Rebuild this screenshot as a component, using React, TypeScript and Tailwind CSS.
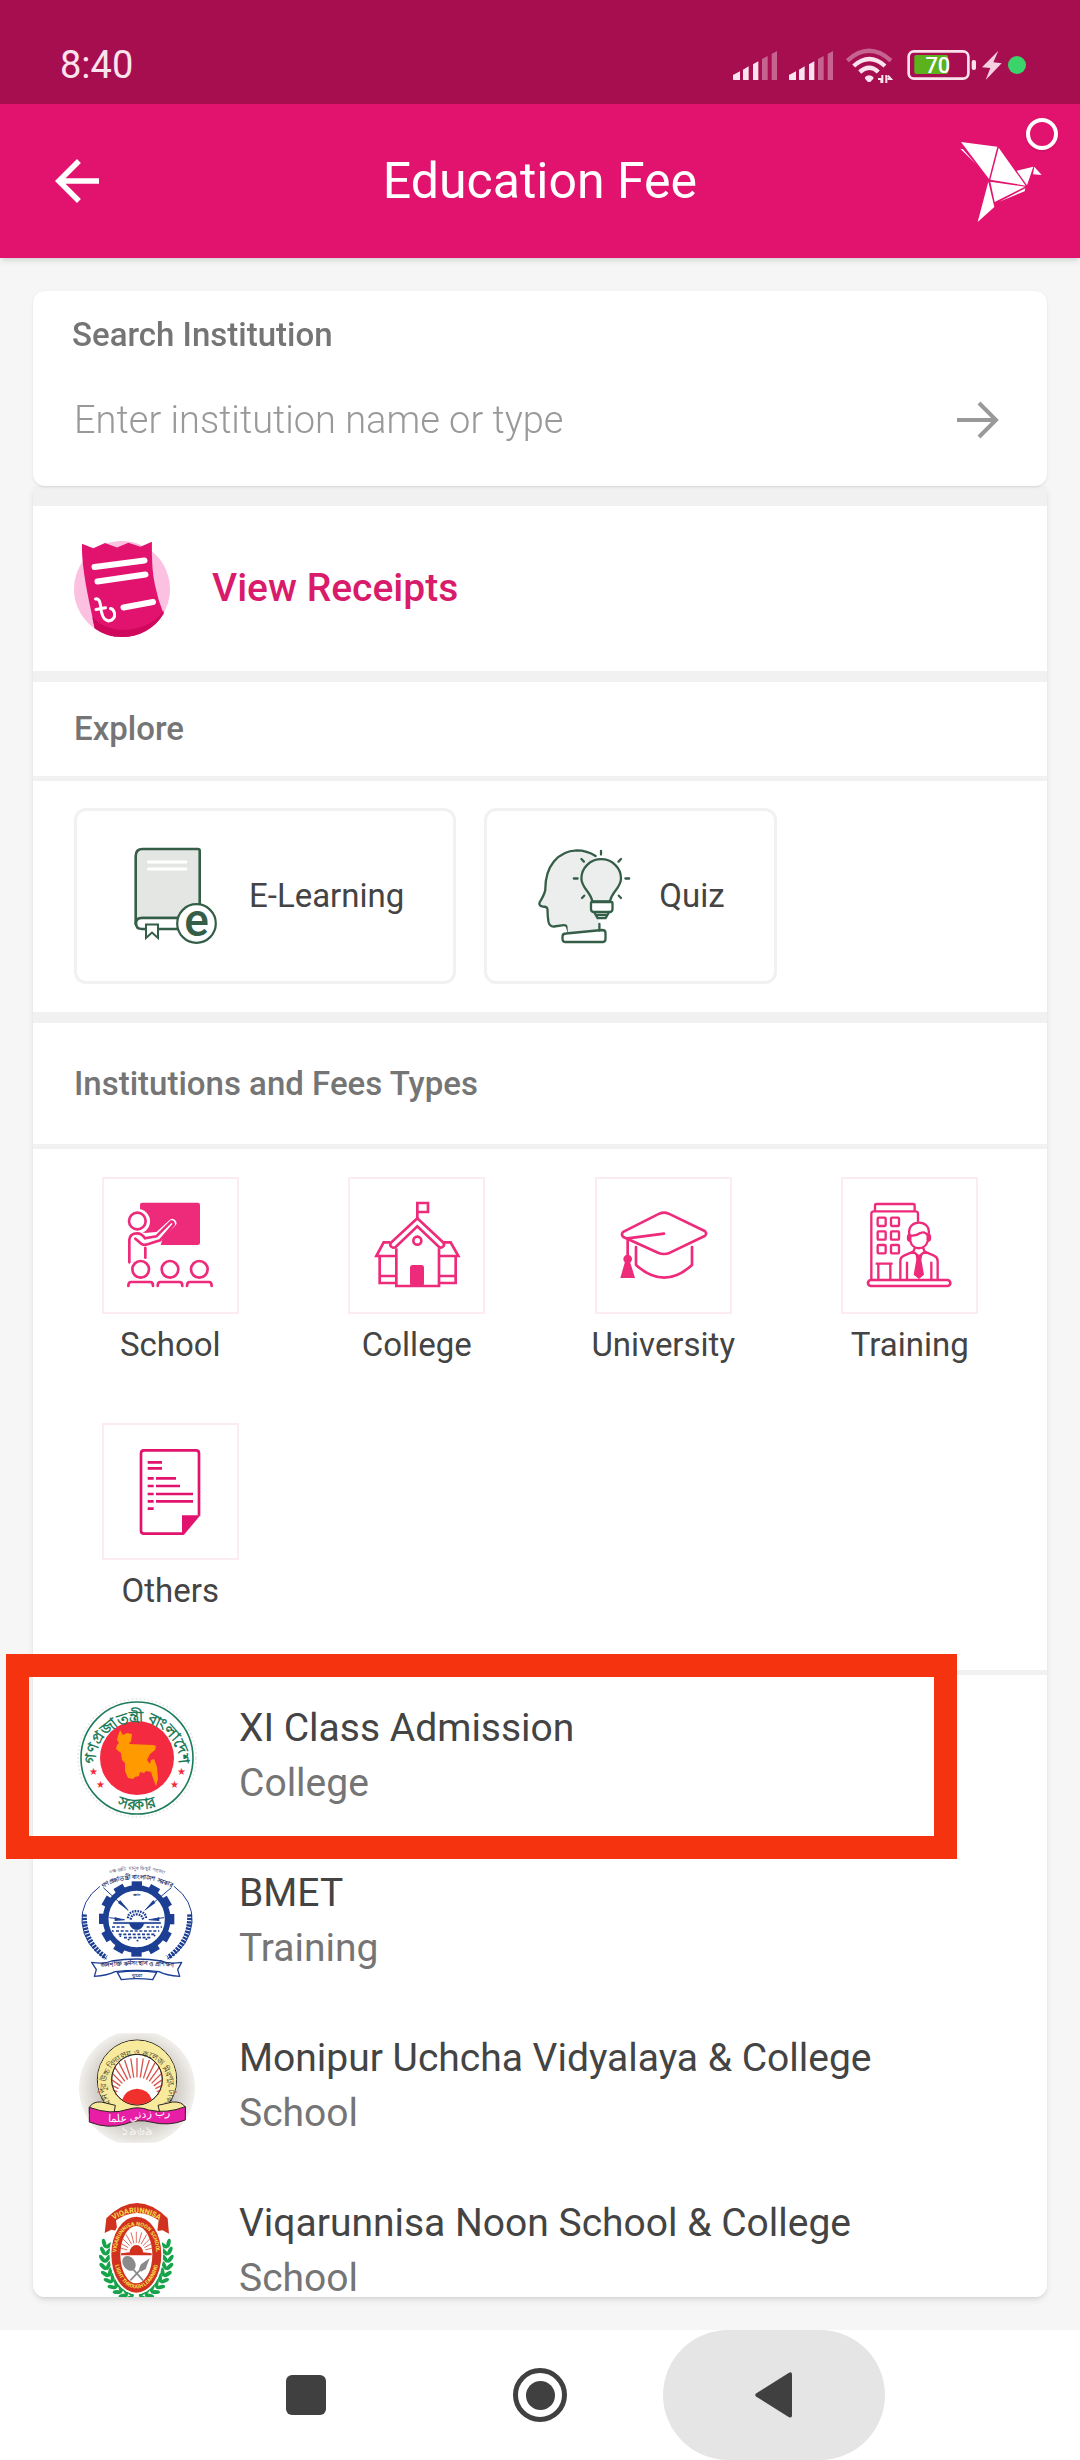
import type { ReactNode } from "react";
import { MdArrowBack } from "react-icons/md";

const PINK = "#ee2a7b";

function SignalIcon() {
  return (
    <svg viewBox="99 78 132 111" className="h-[37px] w-11" fill="#fbe3ee">
      <path d="M99 176v-14l21-11v26h-18z M129 176v-30l17-10v41h-15z M159 176v-46l16-9v56h-14z" />
      <path opacity=".4" d="M186 176v-62l17-9v72h-15z M215 176v-77l16-9v87h-14z" />
    </svg>
  );
}

function WifiIcon() {
  return (
    <svg viewBox="437 78 141 111" className="h-[37px] w-[47px]" fill="none" stroke="#fbe3ee" strokeWidth="13">
      <path opacity=".4" d="M441 119q65-59 131 0" />
      <path d="M460 135q47-42 94 0M478 153q29-25 56 0" />
      <path fill="#fbe3ee" stroke="none" d="M494 168q12-11 25 0v5l-9 10h-7l-9-10z" />
      <path strokeWidth="6" d="M533 174h10v12M546 162v24M558 186v-24M562 174h10l-9-10" />
    </svg>
  );
}

function BatteryIcon() {
  return (
    <svg viewBox="620 78 208 111" className="h-[37px] w-[69px]">
      <rect x="625" y="91" width="180" height="82" rx="16" fill="none" stroke="#fbe3ee" strokeWidth="8" />
      <rect x="642" y="102" width="102" height="57" rx="6" fill="#5cb21d" />
      <rect x="815" y="117" width="13" height="30" rx="6" fill="#fbe3ee" />
      <text x="713" y="157" textAnchor="middle" fontSize="66" fontWeight="500" fill="#fff">
        70
      </text>
    </svg>
  );
}

function BoltIcon() {
  return (
    <svg viewBox="848 78 60 111" className="h-[37px] w-5" fill="#f6cfe0">
      <path d="M897 89l-49 50 25 2-14 36 48-50-25-3z" />
    </svg>
  );
}

function BirdLogo() {
  return (
    <svg viewBox="778 360 246 243" className="h-[81px] w-[82px]" fill="#fff">
      <path d="M781 363l109 14-25 97z" />
      <path d="M894 380l81 114-106-18z" />
      <path d="M948 449l50-12-19 56z" />
      <path d="M1001 437l22 25-26-2z" />
      <path d="M869 482l104 15-91 46z" />
      <path d="M863 482l18 76-50 45z" />
      <path d="M779 383l8 2 38 43z" />
      <path d="M974 502l-2 9-76 31z" />
    </svg>
  );
}

function ReceiptIcon() {
  return (
    <svg viewBox="74 268 96 100" className="h-[100px] w-24 shrink-0">
      <circle cx="122" cy="318" r="48" fill="#fcc0e0" />
      <path
        fill="#e2136e"
        d="M82 272.700l11.300 4.600L105 272l12 4.500 11.400-4.800 12.100 4 11.400-5q-.5 28 3 43 3 15 8.700 29A48 48 0 01122 366Q106 366 94.700 357.300L92 344Q81 295 82 272.700z"
      />
      <path fill="#cf085d" d="M163.600 339.500v3A48 48 0 01122 366Q106 366 94.700 357.300l-2.400-11q12 12 29.700 12.700 29-.5 41.600-19.500z" />
      <path stroke="#fff" strokeWidth="6" strokeLinecap="round" d="M94.500 296l50-6.500M97.500 310.500l48-7M123.500 336.500l29.500-5.500" />
      <path
        fill="none"
        stroke="#fff"
        strokeWidth="3"
        strokeLinecap="round"
        d="M95.500 328q4-1 5 6 1 15 8 16 7-1 6-8-1-4-4-4.500M96 338.500l9.500-1.700"
      />
    </svg>
  );
}

function BookIcon() {
  return (
    <svg viewBox="66 66 100 100" className="size-[100px] overflow-visible" fill="none" stroke="#355e48" strokeWidth="2.600">
      <path fill="#e3e6e3" d="M75.700 145V76q0-7 7-7H138q1.700 0 1.700 1.700V138H81q-5 0-5.300 6" />
      <path fill="#fff" d="M120 138H82q-6 0-6 5.500T82 149h40" />
      <path fill="#fff" strokeWidth="2" d="M86 144.500h12V158l-6-5.500-6 5.500z" />
      <path stroke="#fff" strokeWidth="3" strokeLinecap="round" d="M88.500 82H126M88.500 89H126" />
      <circle cx="136.500" cy="143.500" r="19.300" fill="#fff" strokeWidth="2.200" />
      <text x="136.500" y="156" textAnchor="middle" fontSize="46" fontWeight="500" fill="#355e48" stroke="none">
        e
      </text>
    </svg>
  );
}

function QuizIcon() {
  return (
    <svg viewBox="477 66 100 100" className="size-[100px]" fill="none" stroke="#355e48" strokeWidth="2.300" strokeLinecap="round" strokeLinejoin="round">
      <path
        fill="#eceeed"
        d="M536.600 76Q528 70.300 517.700 70.300C499 71 486 86 486.300 110q-1 5-5.500 12-1.500 4 3 4.500 4.500 0 4.700 3 0 7 1 12.500 1.500 5 5.500 4.500l8-1.200q4.500-.5 5 1.700l2 6.500"
      />
      <path fill="#eceeed" stroke="none" d="M509 153.500l31-3V90l-34 20z" />
      <path fill="#fff" d="M507 153.500l36-3.500q3.500 0 3.500 3v6q0 3-3 3h-37q-3 0-3-3v-2.500q0-3 3.500-3z" />
      <path d="M540.400 144v6.500" />
      <path
        fill="#eceeed"
        d="M533.300 121.500C532 112 522.400 108 522.400 98.500a19.800 19.300 0 0139.600 0c0 9.500-9.700 13.500-11 23z"
      />
      <path fill="#fff" d="M533 122h19.500q1 0 1 1v6q0 3-3 3h-15.500q-3 0-3-3v-6q0-1 1-1z" />
      <path d="M535.600 133l3 5.200h8l3-5.200M538 135h9.500" />
      <path d="M542 71v3.500M522.400 79l2.500 2.600M562 79l-2.500 2.600M514.800 98.500h3.800M566.400 98.500h3.800M523 118l2.200-2.300M562 118l-2.200-2.300" />
    </svg>
  );
}

function SchoolIcon() {
  return (
    <svg viewBox="72 87 399 399" className="size-full" fill="none" stroke={PINK} strokeWidth="8" strokeLinecap="round">
      <rect x="180" y="158" width="180" height="127" rx="7" fill={PINK} stroke="none" />
      <path stroke="#fff" strokeWidth="24" d="M190 262l45-5 42-38" />
      <path fill="#fff" stroke="none" d="M150 248h45l3 10 42-8 8 14-8 30h-70z" />
      <circle cx="172" cy="214" r="38" fill="#fff" stroke="none" />
      <circle cx="172" cy="213" r="25" fill="#fff" />
      <path d="M148 337v-68q2-19 23-19 15 0 24 15l34-6 44-44q8-2 8 9l-41 47-42 13q-8 2-16-4l-16-14M196 294v29" />
      {[182, 270, 358].map((cx) => (
        <g key={cx}>
          <circle cx={cx} cy="358" r="25" fill="#fff" />
          <path d={`M${cx - 37} 408q0-12 8-12h58q8 0 8 12`} />
        </g>
      ))}
    </svg>
  );
}

function CollegeIcon() {
  return (
    <svg viewBox="809 87 399 399" className="size-full" fill="none" stroke={PINK} strokeWidth="8">
      <path d="M1011 204v-45h32v27h-32" />
      <path d="M930 277h-20l-22 41h58M1091 277h20l23 41h-57M898 319v80h48M946 378h-48M1126 319v80h-48M1078 378h48" />
      <path d="M948 295v113h128V295" />
      <path d="M1011 205l-78 72q-7 8 1 14 6 4 12 0l65-62 65 62q7 4 13-2 5-6-1-12z" />
      <circle cx="1011" cy="272" r="12" />
      <rect x="989" y="345" width="42" height="63" rx="8" fill={PINK} stroke="none" />
    </svg>
  );
}

function UniversityIcon() {
  return (
    <svg viewBox="79 87 399 399" className="size-full" fill="none" stroke={PINK} strokeWidth="8" strokeLinecap="round" strokeLinejoin="round">
      <path d="M266 191q14-6 28 0l108 52q9 7 0 15l-104 50q-18 8-36 0l-104-47q-9-9 1-16z" />
      <path d="M280 251l-109 14v60M196 291v54q85 76 168 0v-54" />
      <circle cx="171" cy="327" r="13" fill={PINK} stroke="none" />
      <path d="M163 335h15l15 49h-44z" fill={PINK} stroke="none" />
    </svg>
  );
}

function TrainingIcon() {
  return (
    <svg viewBox="822 87 399 399" className="size-full" fill="none" stroke={PINK} strokeWidth="7" strokeLinejoin="round">
      <path d="M918 184v-17q0-5 5-5h109q5 0 5 5v17M907 389V191q0-7 7-7h126q7 0 7 7v22" strokeLinecap="round" />
      {[203, 244, 285].map((y) => (
        <g key={y}>
          <rect x="926" y={y} width="24" height="25" rx="3" />
          <rect x="966" y={y} width="24" height="25" rx="3" />
        </g>
      ))}
      <path d="M920 341h51M928 341v47M964 341v47" />
      <path d="M1021 253c-8-47 66-47 58 0q5 2 4 12 0 8-7 8c-7 29-46 29-52 0q-7 0-7-8 0-10 4-12zM1024 270v-14q14 4 30-7 14-6 22 7v14" />
      <path d="M994 387v-54q0-11 11-16l28-12 17 15 17-15 28 12q11 5 11 16v54M1014 387v-52M1087 387v-52M1038 293l-6 14M1062 293l6 14" />
      <path d="M1040 314h20l-3 15 8 45-15 13-16-13 8-45z" fill={PINK} stroke="none" />
      <rect x="897" y="390" width="247" height="18" rx="9" strokeWidth="8" />
    </svg>
  );
}

function OthersIcon() {
  return (
    <svg viewBox="72 75 399 399" className="size-full" fill="none" stroke="#e2136e" strokeWidth="8">
      <path d="M357 347V160q0-9-9-9H192q-9 0-9 9v232q0 9 9 9h118" />
      <path d="M306 346h55l-49 58h-6z" fill="#e2136e" stroke="none" />
      <path d="M203 187h43M203 205h43M203 235h18M228 235h60M203 258h18M228 258h72M203 282h18M228 282h111M203 304h18M228 304h111M203 326h18" />
    </svg>
  );
}

function GovSeal() {
  return (
    <svg viewBox="0 0 120 120" className="size-[120px] shrink-0">
      <defs>
        <path id="gov-top" d="M18 66a42 42 0 1184 0" />
        <path id="gov-bottom" d="M10 62a50 50 0 00100 0" />
      </defs>
      <circle cx="60" cy="60" r="59" fill="none" stroke="#ededed" strokeWidth="2" strokeDasharray="2 2" />
      <circle cx="60" cy="60" r="56" fill="#fff" stroke="#1c7c5a" strokeWidth="1.600" />
      <circle cx="60" cy="60" r="37" fill="#f42a41" />
      <path
        fill="#ff9a00"
        d="M43 32l3 5 4-2 5 1-1 7-2 3 24 1 3 1-1 4-5 4-3 6 3 4 1-4 3-1 3 8 1 12-2 7-3-8-2-6-5-1-2 2-4-1-1 4-4 1-2 2-5-1-3-7 0-8-3-3-1-7-5-4 1-4 2-2-2-3 1-4z"
      />
      <g fontSize="15" fontWeight="700" fill="#1c7c5a" textAnchor="middle">
        <text>
          <textPath href="#gov-top" startOffset="50%">
            গণপ্রজাতন্ত্রী বাংলাদেশ
          </textPath>
        </text>
        <text>
          <textPath href="#gov-bottom" startOffset="50%">
            সরকার
          </textPath>
        </text>
      </g>
      <g fill="#f42a41" fontSize="10" textAnchor="middle">
        <text x="16" y="77">★</text>
        <text x="23" y="90">★</text>
        <text x="104" y="77">★</text>
        <text x="97" y="90">★</text>
      </g>
    </svg>
  );
}

const teeth = Array.from({ length: 12 }, (_, i) => i * 30);

function BmetLogo() {
  return (
    <svg viewBox="53 36 360 360" className="size-[120px] shrink-0 overflow-visible" fill="none" stroke="#1c3f94">
      <defs>
        <path id="bmet-outer" d="M130 78q104-44 206 0" />
        <path id="bmet-inner" d="M122 114q110-62 222 0" />
        <path id="bmet-ribbon" d="M104 352q130-18 260 0" />
      </defs>
      <g fill="#1b2c66" stroke="none" textAnchor="middle">
        <text fontSize="14">
          <textPath href="#bmet-outer" startOffset="50%">
            দক্ষ জাতি মানুষ কিছুই পারেনা
          </textPath>
        </text>
        <text fontSize="18" fontWeight="700">
          <textPath href="#bmet-inner" startOffset="50%">
            গণপ্রজাতন্ত্রী বাংলাদেশ সরকার
          </textPath>
        </text>
      </g>
      <path strokeWidth="3" d="M122 106Q64 148 68 214q6 72 74 110M344 106q58 42 54 108-6 72-74 110" />
      <path strokeWidth="15" strokeDasharray="7 3" d="M75 190q-2 84 66 130M391 190q2 84-66 130" />
      {teeth.map((deg) => (
        <rect key={deg} x="217" y="91" width="31" height="28" fill="#1c3f94" stroke="none" transform={`rotate(${deg} 232 204)`} />
      ))}
      <circle cx="232" cy="204" r="93" fill="#fff" strokeWidth="17" />
      <path strokeWidth="3" d="M132 110l74 68M336 110l-78 66M150 200l46 6M314 200l-46 6" />
      <path fill="#1c3f94" stroke="none" d="M210 180l-34-24 6-9zM254 180l34-24-6-9zM196 208l-30-10v12zM270 208l30-10v12z" />
      <path strokeWidth="7" strokeDasharray="5 3" d="M206 202q0-20 26-22 28 2 28 22M214 206q2-16 18-16t20 16" />
      <path fill="#1c3f94" d="M162 214h142v4h-50q-6 18-22 18t-22-18h-48z" />
      <path strokeWidth="5" strokeDasharray="9 5" d="M158 228h40M262 228h46M170 240h130M178 250h112M194 260h80" />
      <path strokeWidth="5" strokeDasharray="1 26" strokeLinecap="round" d="M160 240q72 58 146 0" />
      <path fill="#fff" strokeWidth="4" strokeLinejoin="round" d="M97 334q40 6 60-4 75-12 150 0 20 10 60 4l-12 22 6 20q-40-2-62-14-66-8-132 0-22 12-62 14l6-20z" />
      <path fill="#fff" strokeWidth="4" d="M174 364q58-8 118 0l-12 22q-46-6-94 0z" />
      <g fill="#1b2c66" stroke="none" textAnchor="middle" fontWeight="700">
        <text fontSize="18">
          <textPath href="#bmet-ribbon" startOffset="50%">
            জনশক্তি কর্মসংস্থান ও প্রশিক্ষণ
          </textPath>
        </text>
        <text x="233" y="379" fontSize="16">
          ব্যুরো
        </text>
        <text x="232" y="136" fontSize="13">
          জ্ঞান
        </text>
      </g>
    </svg>
  );
}

const sunRays = Array.from({ length: 19 }, (_, i) => -81 + i * 9);

function MonipurLogo() {
  return (
    <svg viewBox="51 52 360 360" className="size-[120px] shrink-0">
      <defs>
        <clipPath id="moni-clip">
          <path d="M51 68h360v328H51z" />
        </clipPath>
        <radialGradient id="moni-bg">
          <stop offset=".6" stopColor="#c9c5bf" />
          <stop offset="1" stopColor="#f2f0ec" />
        </radialGradient>
        <path id="moni-ring" d="M158 286a94 94 0 11148 0" />
        <path id="moni-ribbon" d="M98 326q60 18 136-2 70-16 140 0" />
      </defs>
      <circle cx="231" cy="232" r="174" fill="url(#moni-bg)" clipPath="url(#moni-clip)" />
      <circle cx="231" cy="207" r="119" fill="#f7ea9c" stroke="#2b2620" strokeWidth="3" />
      <circle cx="231" cy="207" r="76" fill="#fff" stroke="#2b2620" strokeWidth="2" />
      {sunRays.map((deg) => (
        <path key={deg} d="M231 200v-58" stroke="#d9534a" strokeWidth="4" transform={`rotate(${deg} 231 262) `} clipPath="none" />
      ))}
      <circle cx="231" cy="207" r="98" fill="none" stroke="#f7ea9c" strokeWidth="39" />
      <circle cx="231" cy="207" r="76" fill="none" stroke="#2b2620" strokeWidth="3" />
      <path fill="#f0302c" d="M186 268q10-32 45-34 36 2 45 34-45 28-90 0z" />
      <text fontSize="24" fill="#2b2620" textAnchor="middle">
        <textPath href="#moni-ring" startOffset="50%">
          মনিপুর উচ্চ বিদ্যালয় ও কলেজ মিরপুর, ঢাকা
        </textPath>
      </text>
      <path fill="#f7ea9c" stroke="#2b2620" strokeWidth="3" d="M88 290q10-18 36-16l42 10-4 24H88zM376 290q-10-18-38-16l-44 10 6 24h76z" />
      <path fill="#e81ea6" stroke="#2b2620" strokeWidth="3" d="M88 290q64 24 116 6 32-10 62 2 54 12 110-10v40q-50 20-104 6-38-10-76 6-52 16-108-6z" />
      <text fontSize="32" fill="#fff" textAnchor="middle" direction="rtl">
        <textPath href="#moni-ribbon" startOffset="50%">
          رب زدنی علما
        </textPath>
      </text>
      <text x="231" y="374" fontSize="36" fill="#fff" textAnchor="middle">
        ১৯৬৯
      </text>
    </svg>
  );
}

const vnsRays = [-75, -60, -45, -30, -15, 0, 15, 30, 45, 60, 75];
const leaves = Array.from({ length: 10 }, (_, i) => {
  const t = 1.2 + i * 0.19;
  return { x: Math.round(94 * Math.sin(t)), y: Math.round(230 - 116 * Math.cos(t)), deg: Math.round((t * 180) / Math.PI) - 90 };
});

function ViqarunnisaLogo() {
  return (
    <svg viewBox="172 36 360 360" className="size-[120px] shrink-0">
      <defs>
        <path id="vns-banner" d="M275 122q74-54 152 0" />
        <path id="vns-ring" d="M290 222c0-118 120-118 120 0" />
        <path id="vns-ring-low" d="M284 232c10 120 122 120 134 0" />
      </defs>
      {leaves.map(({ x, y, deg }) => (
        <g key={deg} fill="#16a34a">
          <g transform={`translate(${350 + x} ${y}) rotate(${deg})`}>
            <ellipse cx="-8" cy="-3" rx="6" ry="14" transform="rotate(-35)" />
            <ellipse cx="8" cy="-3" rx="6" ry="14" transform="rotate(35)" />
          </g>
          <g transform={`translate(${350 - x} ${y}) rotate(${-deg})`}>
            <ellipse cx="-8" cy="-3" rx="6" ry="14" transform="rotate(-35)" />
            <ellipse cx="8" cy="-3" rx="6" ry="14" transform="rotate(35)" />
          </g>
        </g>
      ))}
      <ellipse cx="350" cy="221" rx="80" ry="119" fill="#fff" />
      <path fill="#d1321f" d="M260 112q92-92 184 0l4 46-19-10-16 2 4-32q-64-44-128 0l4 32-18-4-20 10z" />
      <ellipse cx="350" cy="221" rx="80" ry="119" fill="#fff" />
      <ellipse cx="350" cy="221" rx="75" ry="114" fill="#d1321f" />
      <ellipse cx="350" cy="221" rx="48" ry="86" fill="#fff" />
      {vnsRays.map((deg) => (
        <path key={deg} d="M350 186v-34" stroke="#d1321f" strokeWidth="2" transform={`rotate(${deg} 350 214)`} />
      ))}
      <path fill="#d1321f" d="M330 214a20 22 0 0140 0l26 3v6h-92v-6z" />
      <g fill="#8a8a8a">
        <ellipse cx="328" cy="247" rx="18" ry="24" transform="rotate(-35 328 247)" />
        <path d="M390 232l-12 32-14 8-6-8 6-14z" />
        <path d="M338 262l32 36M366 262l-34 36" stroke="#8a8a8a" strokeWidth="5" />
      </g>
      <g fill="#f7e14a" fontWeight="700" textAnchor="middle">
        <text fontSize="22">
          <textPath href="#vns-banner" startOffset="50%">
            VIQARUNNISA
          </textPath>
        </text>
        <text fontSize="16">
          <textPath href="#vns-ring" startOffset="50%">
            VIQARUNNISA NOON SCHOOL
          </textPath>
        </text>
        <text fontSize="16">
          <textPath href="#vns-ring-low" startOffset="50%">
            LIGHT THROUGH LEARNING
          </textPath>
        </text>
      </g>
    </svg>
  );
}

const categories: { label: string; icon: ReactNode }[] = [
  { label: "School", icon: <SchoolIcon /> },
  { label: "College", icon: <CollegeIcon /> },
  { label: "University", icon: <UniversityIcon /> },
  { label: "Training", icon: <TrainingIcon /> },
  { label: "Others", icon: <OthersIcon /> },
];

const institutions: { name: string; type: string; logo: ReactNode }[] = [
  { name: "XI Class Admission", type: "College", logo: <GovSeal /> },
  { name: "BMET", type: "Training", logo: <BmetLogo /> },
  { name: "Monipur Uchcha Vidyalaya & College", type: "School", logo: <MonipurLogo /> },
  { name: "Viqarunnisa Noon School & College", type: "School", logo: <ViqarunnisaLogo /> },
];

function StatusBar() {
  return (
    <div className="flex h-[104px] shrink-0 items-center bg-[#a60e50] pt-[26px] pr-[54px] pl-[60px] text-[#fbe3ee]">
      <span className="text-[38px]">8:40</span>
      <div className="ml-auto flex items-center">
        <div className="mr-[13px] flex gap-3">
          <SignalIcon />
          <SignalIcon />
        </div>
        <WifiIcon />
        <div className="ml-[14px] flex items-center gap-[6px]">
          <BatteryIcon />
          <BoltIcon />
          <span className="size-[18px] rounded-full bg-[#3bd46a]" />
        </div>
      </div>
    </div>
  );
}

function Header() {
  return (
    <header className="relative z-10 flex h-[154px] shrink-0 items-center justify-between bg-[#e2136e] pr-[38px] pl-11 text-white shadow-md">
      <button aria-label="Back">
        <MdArrowBack size={66} />
      </button>
      <h1 className="pointer-events-none absolute inset-x-0 text-center text-[50px]">Education Fee</h1>
      <BirdLogo />
      <span className="absolute top-[14px] right-[22px] size-8 rounded-full border-4 border-white shadow-sm" />
    </header>
  );
}

function NavBar() {
  return (
    <nav className="flex h-[130px] shrink-0 justify-center gap-3 bg-white">
      <button aria-label="Recent apps" className="flex w-[222px] items-center justify-center">
        <span className="size-10 rounded-md bg-[#404040]" />
      </button>
      <button aria-label="Home" className="flex w-[222px] items-center justify-center">
        <span className="flex size-[54px] items-center justify-center rounded-full border-[5px] border-[#404040]">
          <span className="size-[29px] rounded-full bg-[#404040]" />
        </span>
      </button>
      <button aria-label="Back" className="flex w-[222px] items-center justify-center rounded-full bg-[#e5e5e5]">
        <svg viewBox="0 0 38 46" className="h-[46px] w-[38px]" fill="#404040">
          <path d="M1 21.500L34 .8q3-1.500 3 1.700v41q0 3-3 1.700L1 24.500q-1.500-1.500 0-3z" />
        </svg>
      </button>
    </nav>
  );
}

export default function App() {
  return (
    <div className="flex h-screen flex-col bg-[#f6f6f6] font-[Roboto,sans-serif] text-[#444]">
      <StatusBar />
      <Header />

      <main className="relative flex min-h-0 flex-1 flex-col p-[33px]">
        <form className="relative shrink-0 rounded-xl bg-white px-[39px] pt-[22px] pb-[30px] shadow-sm">
          <label htmlFor="institution" className="block text-[33px] leading-[44px] font-medium text-[#757575]">
            Search Institution
          </label>
          <div className="mt-[26px] flex items-center pr-[9px]">
            <input
              id="institution"
              type="text"
              placeholder="Enter institution name or type"
              className="h-[73px] min-w-0 flex-1 pl-[2px] text-[38px] font-light outline-none placeholder:text-[#999]"
            />
            <button type="button" aria-label="Search">
              <svg viewBox="0 0 42 38" className="h-[38px] w-[42px]" fill="none" stroke="#999" strokeWidth="4">
                <path d="M0 19h39M22 2l17 17-17 17" />
              </svg>
            </button>
          </div>
        </form>

        <div className="min-h-0 flex-1 overflow-y-auto rounded-b-xl border-t-[20px] border-[#f1f1f1] bg-white shadow-md [scrollbar-width:none]">
          <section className="border-b-[11px] border-[#f1f1f1]">
            <a href="#receipts" className="flex h-[165px] items-center gap-[42px] px-[41px] text-[39px] font-medium text-[#d81b6a]">
              <ReceiptIcon />
              View Receipts
            </a>
          </section>

          <section className="border-b-[11px] border-[#f1f1f1]">
            <h2 className="flex h-[99px] items-center border-b-[5px] border-[#f1f1f1] px-[41px] text-[33px] font-medium text-[#757575]">
              Explore
            </h2>
            <div className="flex gap-7 px-[41px] pt-[27px] pb-7">
              <button className="flex h-[176px] items-center gap-[23px] rounded-xl border-3 border-[#f1f1f1] px-[49px] text-[33px]">
                <BookIcon />
                E-Learning
              </button>
              <button className="flex h-[176px] items-center gap-[23px] rounded-xl border-3 border-[#f1f1f1] px-[49px] text-[33px]">
                <QuizIcon />
                Quiz
              </button>
            </div>
          </section>

          <section className="border-b-[5px] border-[#f1f1f1]">
            <h2 className="flex h-[126px] items-center border-b-[5px] border-[#f1f1f1] px-[41px] text-[33px] font-medium text-[#757575]">
              Institutions and Fees Types
            </h2>
            <div className="grid grid-cols-4 gap-y-[58px] px-[14px] pt-7 pb-[59px]">
              {categories.map(({ label, icon }) => (
                <button key={label} className="flex flex-col items-center gap-[11px]">
                  <span className="size-[137px] border-2 border-[#fdebf2]">{icon}</span>
                  <span className="text-[33px] leading-10">{label}</span>
                </button>
              ))}
            </div>
          </section>

          <ul>
            {institutions.map(({ name, type, logo }) => (
              <li key={name}>
                <a href="#institution" className="flex h-[165px] items-center gap-[42px] pl-11">
                  {logo}
                  <span className="pb-1 text-[39px] leading-[55px]">
                    <span className="block">{name}</span>
                    <span className="block text-[#757575]">{type}</span>
                  </span>
                </a>
              </li>
            ))}
          </ul>
        </div>

        {/* marks the XI Class Admission row */}
        <div className="pointer-events-none absolute top-[1396px] right-[123px] left-[6px] h-[205px] border-[23px] border-[#f6330f]" />
      </main>

      <NavBar />
    </div>
  );
}
